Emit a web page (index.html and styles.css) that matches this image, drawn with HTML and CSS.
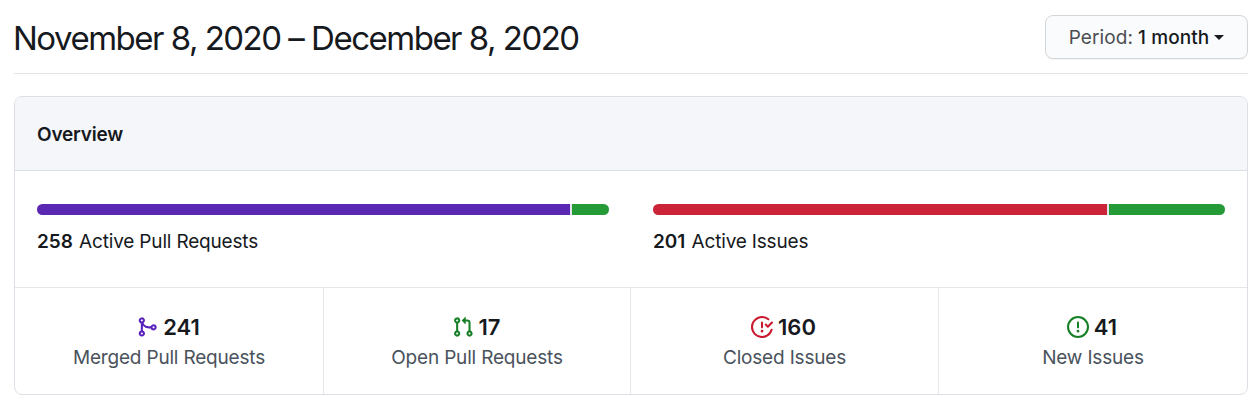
FILE: index.html
```html
<!DOCTYPE html>
<html lang="en">
<head>
    <meta charset="UTF-8">
    <meta name="viewport" content="width=device-width, initial-scale=1.0">
    <title>Pulse</title>
    <link rel="stylesheet" href="styles.css">
</head>
<body>
    <div class="subhead">
        <h2 class="subhead-title">November 8, 2020 – December 8, 2020</h2>
        <button class="btn" type="button">
            <span class="btn-label">Period:</span>
            <span class="btn-value">1 month</span>
            <span class="caret"></span>
        </button>
    </div>

    <div class="box">
        <div class="box-header"><h3>Overview</h3></div>

        <div class="graphs">
            <div class="graph">
                <div class="progress">
                    <span class="merged" style="width: 93.2%"></span>
                    <span class="open"></span>
                </div>
                <p><strong>258</strong> Active Pull Requests</p>
            </div>
            <div class="graph">
                <div class="progress">
                    <span class="closed" style="width: 79.3%"></span>
                    <span class="open"></span>
                </div>
                <p><strong>201</strong> Active Issues</p>
            </div>
        </div>

        <ul class="summary">
            <li>
                <div class="count">
                    <svg class="icon purple" viewBox="0 0 16 16"><path fill-rule="evenodd" d="M5 3.254V3.25v.005a.75.75 0 110-.005v.004zm.45 1.9a2.25 2.25 0 10-1.95.218v5.256a2.25 2.25 0 101.5 0V7.123A5.735 5.735 0 009.25 9h1.378a2.251 2.251 0 100-1.5H9.25a4.25 4.25 0 01-3.8-2.346zM12.75 9a.75.75 0 100-1.5.75.75 0 000 1.5zm-8.5 4.5a.75.75 0 100-1.5.75.75 0 000 1.5z"/></svg>
                    <span>241</span>
                </div>
                <span class="label">Merged Pull Requests</span>
            </li>
            <li>
                <div class="count">
                    <svg class="icon green" viewBox="0 0 16 16"><path fill-rule="evenodd" d="M7.177 3.073L9.573.677A.25.25 0 0110 .854v4.792a.25.25 0 01-.427.177L7.177 3.427a.25.25 0 010-.354zM3.75 2.5a.75.75 0 100 1.5.75.75 0 000-1.5zm-2.25.75a2.25 2.25 0 113 2.122v5.256a2.251 2.251 0 11-1.5 0V5.372A2.25 2.25 0 011.5 3.25zM11 2.5h-1V4h1a1 1 0 011 1v5.628a2.251 2.251 0 101.5 0V5A2.5 2.5 0 0011 2.5zm1 10.25a.75.75 0 111.5 0 .75.75 0 01-1.5 0zM3.75 12a.75.75 0 100 1.5.75.75 0 000-1.5z"/></svg>
                    <span>17</span>
                </div>
                <span class="label">Open Pull Requests</span>
            </li>
            <li>
                <div class="count">
                    <svg class="icon red" viewBox="0 0 16 16"><path fill-rule="evenodd" d="M1.5 8a6.5 6.5 0 0110.65-5.003.75.75 0 00.959-1.153 8 8 0 102.592 8.33.75.75 0 10-1.444-.407A6.5 6.5 0 011.5 8zM8 12a1 1 0 100-2 1 1 0 000 2zm0-8a.75.75 0 01.75.75v3.5a.75.75 0 11-1.5 0v-3.5A.75.75 0 018 4zm4.78 4.28l3-3a.75.75 0 00-1.06-1.06l-2.47 2.47-.97-.97a.749.749 0 10-1.06 1.06l1.5 1.5a.75.75 0 001.06 0z"/></svg>
                    <span>160</span>
                </div>
                <span class="label">Closed Issues</span>
            </li>
            <li>
                <div class="count">
                    <svg class="icon green" viewBox="0 0 16 16"><path fill-rule="evenodd" d="M8 1.5a6.5 6.5 0 100 13 6.5 6.5 0 000-13zM0 8a8 8 0 1116 0A8 8 0 010 8zm9 3a1 1 0 11-2 0 1 1 0 012 0zm-.25-6.25a.75.75 0 00-1.5 0v3.5a.75.75 0 001.5 0v-3.5z"/></svg>
                    <span>41</span>
                </div>
                <span class="label">New Issues</span>
            </li>
        </ul>
    </div>
</body>
</html>
```
FILE: styles.css
```css
* {
    box-sizing: border-box;
}
body {
    margin: 0;
    padding: 15px 7px 0 14px;
    font-family: Inter, "Liberation Sans", sans-serif;
    font-size: 19px;
    line-height: 29px;
    letter-spacing: -0.18px;
    color: #16191d;
    background: #fff;
}
h2, h3, p, ul {
    margin: 0;
    padding: 0;
}
.subhead {
    display: flex;
    justify-content: space-between;
    align-items: flex-start;
    height: 59px;
    margin-bottom: 22px;
    border-bottom: 1px solid #e1e4e8;
}
.subhead-title {
    margin-left: -1px;
    font-size: 33px;
    font-weight: 400;
    line-height: 46px;
    letter-spacing: -1.5px;
    white-space: nowrap;
}
.btn {
    display: flex;
    align-items: center;
    justify-content: center;
    gap: 5px;
    width: 203px;
    height: 44px;
    padding: 0;
    font-family: inherit;
    font-size: 19px;
    font-weight: 500;
    letter-spacing: 0.1px;
    color: #16191d;
    background: #fafbfc;
    border: 1px solid #d3d6d9;
    border-radius: 8px;
    box-shadow: 0 1px 0 rgba(27, 31, 35, 0.04);
}
.btn-label {
    color: #4b4e52;
    font-weight: 400;
}
.caret {
    border: 5.5px solid transparent;
    border-top-color: #16191d;
    border-bottom: 0;
}
.box {
    height: 299px;
    border: 1px solid #dcdfe5;
    border-radius: 8px;
    overflow: hidden;
}
.box-header {
    height: 74px;
    padding: 23px 22px;
    background: #f4f6fa;
    border-bottom: 1px solid #dcdfe5;
}
.box-header h3 {
    font-size: 19px;
    font-weight: 600;
    line-height: 29px;
}
.graphs {
    display: grid;
    grid-template-columns: 1fr 1fr;
    gap: 44px;
    height: 116px;
    padding: 33px 22px 0;
}
.progress {
    display: flex;
    gap: 2px;
    height: 11px;
    margin-bottom: 12px;
    background: #e1e4e8;
    border-radius: 6px;
    overflow: hidden;
}
.progress .merged {
    background: #5a28b2;
}
.progress .closed {
    background: #cb2439;
}
.progress .open {
    flex: 1;
    background: #249b36;
}
.graph strong {
    margin-right: 1px;
    font-weight: 600;
    letter-spacing: 0;
}
.summary {
    display: grid;
    grid-template-columns: 308px 307px 308px 1fr;
    height: 107px;
    border-top: 1px solid #e4e6ea;
    list-style: none;
}
.summary li {
    padding-top: 24px;
    text-align: center;
    border-left: 1px solid #e4e6ea;
}
.summary li:first-child {
    border-left: 0;
}
.count {
    display: flex;
    align-items: center;
    justify-content: center;
    gap: 5px;
    height: 30px;
    margin-bottom: 1px;
    padding-right: 2px;
    font-size: 22px;
    font-weight: 600;
    letter-spacing: 0;
}
.icon {
    width: 22px;
    height: 22px;
    fill: currentColor;
}
.label {
    color: #4a525c;
}
.purple {
    color: #5a22bd;
}
.green {
    color: #178027;
}
.red {
    color: #cb1a30;
}
```
